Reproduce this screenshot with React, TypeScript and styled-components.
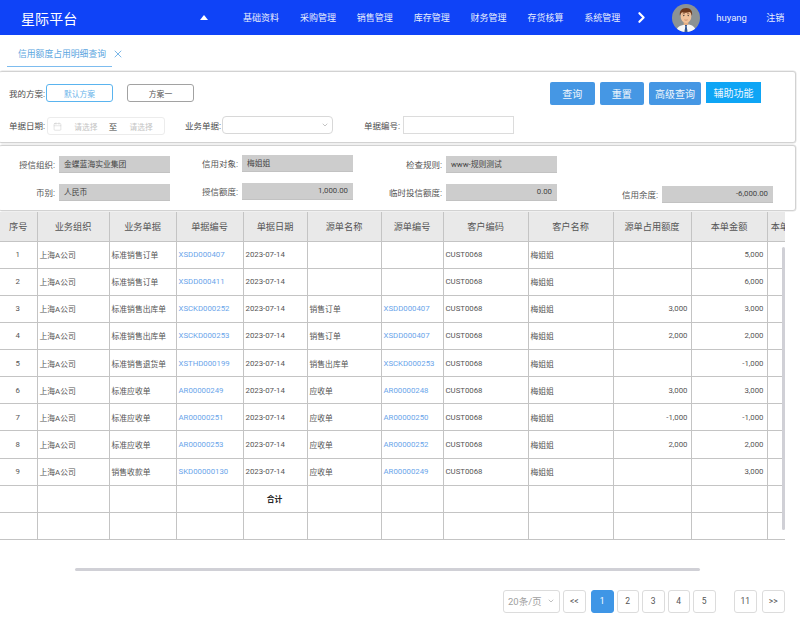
import React from 'react';
import styled, { createGlobalStyle } from 'styled-components';
import { Calendar, ChevronDown, ChevronRight, X } from 'lucide-react';

const GlobalStyle = createGlobalStyle`
  html, body {
    margin: 0;
    padding: 0;
    background: #fff;
    overflow: hidden;
  }
  * {
    box-sizing: border-box;
  }
`;

const Page = styled.div`
  width: 800px;
  height: 617px;
  overflow: hidden;
  font-family: 'Roboto', 'Noto Sans CJK SC', sans-serif;
  font-size: 8.5px;
  color: #555;
`;

const Header = styled.header`
  height: 35px;
  background: #0f43f7;
  color: #e8eefc;
  display: flex;
  align-items: center;
  padding-left: 21px;
`;

const Brand = styled.div`
  width: 179px;
  font-size: 14px;
  color: #fff;
  letter-spacing: 0.1px;
`;

const UpArrow = styled.span`
  width: 0;
  height: 0;
  margin-right: 35px;
  border-left: 4.5px solid transparent;
  border-right: 4.5px solid transparent;
  border-bottom: 5px solid #fff;
`;

const NavItem = styled.a`
  width: 56.9px;
  font-size: 9px;
  white-space: nowrap;
`;

const NavNext = styled.span`
  display: flex;
  width: 39px;
  margin-left: -8px;
  color: #fff;
`;

const Avatar = styled.svg`
  width: 28px;
  height: 28px;
  flex: none;
`;

const UserName = styled.span`
  margin-left: 16px;
  width: 50px;
  font-size: 9.5px;
`;

const Logout = styled.span`
  font-size: 9px;
`;

const TabBar = styled.div`
  height: 36px;
  display: flex;
  align-items: flex-start;
  padding-left: 7px;
`;

const Tab = styled.div`
  width: 105px;
  height: 32px;
  display: flex;
  align-items: center;
  padding: 6px 0 0 11px;
  color: #5aa5e0;
  font-size: 8.8px;
  border-bottom: 1px solid #7dbcef;
  white-space: nowrap;
`;

const TabClose = styled.span`
  display: flex;
  margin: 13px 0 0 0;
  color: #4f9fe0;
`;

const Panel = styled.section<{ $height: number }>`
  width: 797px;
  height: ${p => p.$height}px;
  margin-left: -1px;
  border: 1px solid #d2d2d2;
  border-width: 1px 1px 1px 0;
  border-radius: 3px;
  box-shadow: 0 0 0 0.5px #e2e2e2;
`;

const QueryPanel = styled(Panel)`
  display: flex;
  flex-direction: column;
  padding: 10px 0 0 10px;
  margin-bottom: 2px;
`;

const PlanRow = styled.div`
  height: 24px;
  display: flex;
  align-items: flex-start;
`;

const Label = styled.span<{ $width?: number }>`
  flex: none;
  width: ${p => (p.$width ? `${p.$width}px` : 'auto')};
  text-align: right;
  white-space: nowrap;
  color: #4c4c4c;
`;

const PlanLabel = styled(Label)`
  width: 37px;
  text-align: left;
  margin-top: 5px;
`;

const PlanButton = styled.button<{ $active?: boolean }>`
  width: 67px;
  height: 18px;
  margin: 2px 14px 0 0;
  padding: 0;
  background: #fff;
  border-radius: 3px;
  font-family: inherit;
  font-size: 7.8px;
  border: 1px solid ${p => (p.$active ? '#5ab4ef' : '#a2a2a2')};
  color: ${p => (p.$active ? '#6bb5ea' : '#555')};
`;

const Actions = styled.div`
  margin-left: auto;
  margin-right: 34px;
  display: flex;
  gap: 5px;
`;

const ActionButton = styled.button<{ $width: number; $assist?: boolean }>`
  width: ${p => p.$width}px;
  height: ${p => (p.$assist ? 21 : 23)}px;
  padding: 0;
  border: none;
  border-radius: ${p => (p.$assist ? 0 : 2)}px;
  background: ${p => (p.$assist ? '#0ea5f5' : '#4597e4')};
  color: #f1f7fd;
  font-family: inherit;
  font-size: 10px;
`;

const FilterRow = styled.div`
  display: flex;
  align-items: center;
  margin-top: 8px;
`;

const DateRange = styled.div`
  width: 118px;
  height: 18px;
  margin: 3px 20px 0 3px;
  padding-left: 5px;
  border: 1px solid #ececec;
  border-radius: 3px;
  display: flex;
  align-items: center;
  color: #c4c4c4;
  font-size: 7.7px;
`;

const DateHolder = styled.span`
  width: 40px;
  text-align: center;
  margin: 0 3px 0 4px;
`;

const DateTo = styled.span`
  color: #444;
  font-size: 8.5px;
`;

const SelectBox = styled.div`
  width: 111px;
  height: 18px;
  margin: 0 31px 0 1px;
  padding-right: 3px;
  border: 1px solid #d8d8d8;
  border-radius: 4px;
  display: flex;
  align-items: center;
  justify-content: flex-end;
  color: #a8a8a8;
`;

const InputBox = styled.div`
  width: 111px;
  height: 18px;
  margin-left: 4px;
  border: 1px solid #dcdcdc;
`;

const CreditPanel = styled(Panel)`
  display: flex;
  margin-bottom: 1px;
`;

const CreditColumn = styled.div<{ $width: number; $top: number }>`
  width: ${p => p.$width}px;
  padding-top: ${p => p.$top}px;
  display: flex;
  flex-direction: column;
  align-items: flex-end;
  gap: 11px;
`;

const CreditLine = styled.div`
  display: flex;
  align-items: center;
  gap: 4px;
`;

const CreditLabel = styled.span`
  white-space: nowrap;
  color: #555;
  margin-bottom: 2px;
`;

const CreditValue = styled.div<{ $right?: boolean }>`
  width: 111px;
  height: 17px;
  padding: 0 5px 2px 5px;
  background: #cdcdcd;
  border-bottom: 1px solid #c2c2c2;
  color: #444;
  font-size: 7.8px;
  display: flex;
  align-items: center;
  justify-content: ${p => (p.$right ? 'flex-end' : 'flex-start')};
`;

const TableWrap = styled.div`
  position: relative;
  width: 785px;
  height: 328px;
  overflow: hidden;
`;

const Table = styled.table`
  width: 811px;
  table-layout: fixed;
  border-collapse: collapse;
`;

const Th = styled.th`
  height: 29px;
  background: #e9e9e9;
  border: 1px solid #c4c4c4;
  border-top: none;
  font-size: 9.2px;
  font-weight: 400;
  color: #555;
  white-space: nowrap;
  padding: 0;
  &:first-child {
    border-left: none;
  }
`;

const Tr = styled.tr`
  height: 27.14px;
`;

const Td = styled.td<{ $align?: string; $link?: boolean; $bold?: boolean }>`
  border: 1px solid #c4c4c4;
  padding: 0 3px 0 2px;
  font-size: 7.8px;
  white-space: nowrap;
  overflow: hidden;
  text-align: ${p => p.$align ?? 'left'};
  color: ${p => (p.$link ? '#6aa5ea' : p.$bold ? '#222' : '#555')};
  font-weight: ${p => (p.$bold ? 700 : 400)};
  &:first-child {
    border-left: none;
  }
`;

const VerticalBar = styled.div`
  position: absolute;
  left: 782px;
  top: 35px;
  width: 3px;
  height: 283px;
  border-radius: 2px;
  background: #d0d0d6;
`;

const HorizontalTrack = styled.div`
  height: 28px;
  padding: 28px 0 0 75px;
`;

const HorizontalBar = styled.div`
  width: 625px;
  height: 3px;
  border-radius: 2px;
  background: #d0d0d6;
`;

const Pager = styled.nav`
  margin-top: 22px;
  padding-left: 503px;
  display: flex;
  align-items: center;
  color: #555;
`;

const PageSize = styled.div`
  width: 57px;
  height: 22.5px;
  padding: 0 4px;
  display: flex;
  align-items: center;
  justify-content: space-between;
  border: 1px solid #dcdcdc;
  border-radius: 3px;
  color: #a0a0a0;
  font-size: 9.5px;
`;

const PageButton = styled.button<{ $active?: boolean; $ml?: number }>`
  width: 22.5px;
  height: 22.5px;
  margin-left: ${p => p.$ml ?? 3}px;
  padding: 0;
  border-radius: 3px;
  font-family: inherit;
  font-size: 8.5px;
  background: ${p => (p.$active ? '#3f96e6' : '#fff')};
  border: 1px solid ${p => (p.$active ? '#3f96e6' : '#dcdcdc')};
  color: ${p => (p.$active ? '#fff' : '#555')};
`;

const columns = [
  { title: '序号', width: 37 },
  { title: '业务组织', width: 72 },
  { title: '业务单据', width: 67 },
  { title: '单据编号', width: 67 },
  { title: '单据日期', width: 64 },
  { title: '源单名称', width: 74 },
  { title: '源单编号', width: 62 },
  { title: '客户编码', width: 85 },
  { title: '客户名称', width: 85 },
  { title: '源单占用额度', width: 78 },
  { title: '本单金额', width: 76 },
  { title: '本单金额', width: 44 },
];

const rows = [
  ['1', '标准销售订单', 'XSDD000407', '', '', '', '5,000'],
  ['2', '标准销售订单', 'XSDD000411', '', '', '', '6,000'],
  ['3', '标准销售出库单', 'XSCKD000252', '销售订单', 'XSDD000407', '3,000', '3,000'],
  ['4', '标准销售出库单', 'XSCKD000253', '销售订单', 'XSDD000407', '2,000', '2,000'],
  ['5', '标准销售退货单', 'XSTHD000199', '销售出库单', 'XSCKD000253', '', '-1,000'],
  ['6', '标准应收单', 'AR00000249', '应收单', 'AR00000248', '3,000', '3,000'],
  ['7', '标准应收单', 'AR00000251', '应收单', 'AR00000250', '-1,000', '-1,000'],
  ['8', '标准应收单', 'AR00000253', '应收单', 'AR00000252', '2,000', '2,000'],
  ['9', '销售收款单', 'SKD00000130', '应收单', 'AR00000249', '', '3,000'],
];

const navItems = ['基础资料', '采购管理', '销售管理', '库存管理', '财务管理', '存货核算', '系统管理'];

const UserAvatar = () => (
  <Avatar viewBox="0 0 28 28">
    <defs>
      <clipPath id="avatar-clip">
        <circle cx="14" cy="14" r="14" />
      </clipPath>
    </defs>
    <g clipPath="url(#avatar-clip)">
      <rect width="28" height="28" fill="#8b9294" />
      <path d="M4 29c0-6 4-8 10-8.500s10 2.500 10 8.500z" fill="#f7f7f7" />
      <path d="M12.700 20.500h2.600l-.6 2 1 6h-3.400l1-6z" fill="#33568f" />
      <rect x="11.700" y="16" width="4.600" height="5" fill="#e3ad83" />
      <ellipse cx="14" cy="12" rx="5.400" ry="7" fill="#f0c29b" />
      <path d="M8 12c-1-5 1.500-8 6.300-8 4.200 0 6.600 3 5.700 8-.6-2-1-3.300-2-4-2.500 1-6 1-8 .2-1 1-1.600 2-2 3.800z" fill="#6e3a1c" />
      <circle cx="11.800" cy="11.600" r=".7" fill="#2b2b2b" />
      <circle cx="16.200" cy="11.600" r=".7" fill="#2b2b2b" />
      <path d="M10.600 10c.8-.5 1.700-.5 2.300-.2M15.100 9.800c.6-.3 1.500-.3 2.300.2" stroke="#5b3018" strokeWidth=".6" fill="none" />
      <path d="M12.400 15.800c1 .5 2.200.5 3.200 0" stroke="#a8603f" strokeWidth=".5" fill="none" />
    </g>
  </Avatar>
);

const App = () => (
  <Page>
    <GlobalStyle />
    <Header>
      <Brand>星际平台</Brand>
      <UpArrow />
      {navItems.map(item => (
        <NavItem key={item}>{item}</NavItem>
      ))}
      <NavNext>
        <ChevronRight size={17} strokeWidth={3} />
      </NavNext>
      <UserAvatar />
      <UserName>huyang</UserName>
      <Logout>注销</Logout>
    </Header>

    <TabBar>
      <Tab>信用额度占用明细查询</Tab>
      <TabClose>
        <X size={12} strokeWidth={1.5} />
      </TabClose>
    </TabBar>

    <QueryPanel $height={72}>
      <PlanRow>
        <PlanLabel>我的方案:</PlanLabel>
        <PlanButton $active>默认方案</PlanButton>
        <PlanButton>方案一</PlanButton>
        <Actions>
          <ActionButton $width={44.5}>查询</ActionButton>
          <ActionButton $width={44.5}>重置</ActionButton>
          <ActionButton $width={52}>高级查询</ActionButton>
          <ActionButton $width={55} $assist>辅助功能</ActionButton>
        </Actions>
      </PlanRow>
      <FilterRow>
        <Label $width={35}>单据日期:</Label>
        <DateRange>
          <Calendar size={9} strokeWidth={1.2} />
          <DateHolder>请选择</DateHolder>
          <DateTo>至</DateTo>
          <DateHolder>请选择</DateHolder>
        </DateRange>
        <Label $width={36}>业务单据:</Label>
        <SelectBox>
          <ChevronDown size={8} />
        </SelectBox>
        <Label $width={35}>单据编号:</Label>
        <InputBox />
      </FilterRow>
    </QueryPanel>

    <CreditPanel $height={66}>
      <CreditColumn $width={171} $top={10}>
        <CreditLine>
          <CreditLabel>授信组织:</CreditLabel>
          <CreditValue>金蝶蓝海实业集团</CreditValue>
        </CreditLine>
        <CreditLine>
          <CreditLabel>币别:</CreditLabel>
          <CreditValue>人民币</CreditValue>
        </CreditLine>
      </CreditColumn>
      <CreditColumn $width={183} $top={9}>
        <CreditLine>
          <CreditLabel>信用对象:</CreditLabel>
          <CreditValue>梅姐姐</CreditValue>
        </CreditLine>
        <CreditLine>
          <CreditLabel>授信额度:</CreditLabel>
          <CreditValue $right>1,000.00</CreditValue>
        </CreditLine>
      </CreditColumn>
      <CreditColumn $width={204} $top={10}>
        <CreditLine>
          <CreditLabel>检查规则:</CreditLabel>
          <CreditValue>www-规则测试</CreditValue>
        </CreditLine>
        <CreditLine>
          <CreditLabel>临时投信额度:</CreditLabel>
          <CreditValue $right>0.00</CreditValue>
        </CreditLine>
      </CreditColumn>
      <CreditColumn $width={216} $top={40}>
        <CreditLine>
          <CreditLabel>信用余度:</CreditLabel>
          <CreditValue $right>-6,000.00</CreditValue>
        </CreditLine>
      </CreditColumn>
    </CreditPanel>

    <TableWrap>
      <Table>
        <colgroup>
          {columns.map((col, i) => (
            <col key={i} style={{ width: col.width }} />
          ))}
        </colgroup>
        <thead>
          <tr>
            {columns.map((col, i) => (
              <Th key={i}>{col.title}</Th>
            ))}
          </tr>
        </thead>
        <tbody>
          {rows.map(row => (
            <Tr key={row[0]}>
              <Td $align="center">{row[0]}</Td>
              <Td>上海A公司</Td>
              <Td>{row[1]}</Td>
              <Td $link>{row[2]}</Td>
              <Td>2023-07-14</Td>
              <Td>{row[3]}</Td>
              <Td $link>{row[4]}</Td>
              <Td>CUST0068</Td>
              <Td>梅姐姐</Td>
              <Td $align="right">{row[5]}</Td>
              <Td $align="right">{row[6]}</Td>
              <Td />
            </Tr>
          ))}
          <Tr>
            {columns.map((_, i) => (
              <Td key={i} $align="center" $bold>
                {i === 4 ? '合计' : ''}
              </Td>
            ))}
          </Tr>
          <Tr>
            {columns.map((_, i) => (
              <Td key={i} />
            ))}
          </Tr>
        </tbody>
      </Table>
      <VerticalBar />
    </TableWrap>

    <HorizontalTrack>
      <HorizontalBar />
    </HorizontalTrack>

    <Pager>
      <PageSize>
        20条/页
        <ChevronDown size={8} />
      </PageSize>
      <PageButton>{'<<'}</PageButton>
      <PageButton $active $ml={5.5}>1</PageButton>
      <PageButton>2</PageButton>
      <PageButton>3</PageButton>
      <PageButton>4</PageButton>
      <PageButton>5</PageButton>
      <PageButton $ml={18.5}>11</PageButton>
      <PageButton $ml={5.5}>{'>>'}</PageButton>
    </Pager>
  </Page>
);

export default App;
